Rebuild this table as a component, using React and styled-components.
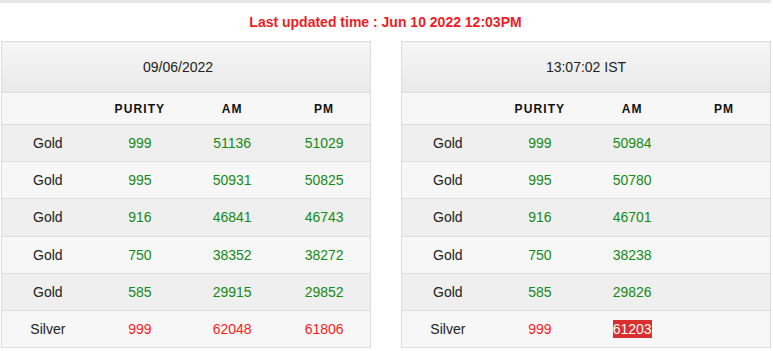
import React from "react";
import styled, { createGlobalStyle } from "styled-components";

const GlobalStyle = createGlobalStyle`
  body {
    margin: 0;
    background: #fff;
    font-family: "Liberation Sans", Arial, sans-serif;
    color: #333;
  }
`;

const leftRows = [
  { metal: "Gold", purity: "999", am: "51136", pm: "51029" },
  { metal: "Gold", purity: "995", am: "50931", pm: "50825" },
  { metal: "Gold", purity: "916", am: "46841", pm: "46743" },
  { metal: "Gold", purity: "750", am: "38352", pm: "38272" },
  { metal: "Gold", purity: "585", am: "29915", pm: "29852" },
  { metal: "Silver", purity: "999", am: "62048", pm: "61806" },
];

const rightRows = [
  { metal: "Gold", purity: "999", am: "50984", pm: "" },
  { metal: "Gold", purity: "995", am: "50780", pm: "" },
  { metal: "Gold", purity: "916", am: "46701", pm: "" },
  { metal: "Gold", purity: "750", am: "38238", pm: "" },
  { metal: "Gold", purity: "585", am: "29826", pm: "" },
  { metal: "Silver", purity: "999", am: "61203", pm: "", flash: true },
];

const RateTable = ({ title, rows, shift }) => (
  <Table>
    <thead>
      <tr>
        <TitleCell colSpan={4} $shift={shift}>
          {title}
        </TitleCell>
      </tr>
      <tr>
        <HeadCell />
        <HeadCell>PURITY</HeadCell>
        <HeadCell>AM</HeadCell>
        <HeadCell>PM</HeadCell>
      </tr>
    </thead>
    <tbody>
      {rows.map((row, i) => {
        const silver = row.metal === "Silver";
        return (
          <Row key={i} $odd={i % 2 === 0}>
            <Cell>{row.metal}</Cell>
            <Cell $silver={silver} $value>
              {row.purity}
            </Cell>
            <Cell $silver={silver} $value>
              {row.flash ? <Flash>{row.am}</Flash> : row.am}
            </Cell>
            <Cell $silver={silver} $value>
              {row.pm}
            </Cell>
          </Row>
        );
      })}
    </tbody>
  </Table>
);

const App = () => (
  <>
    <GlobalStyle />
    <Page>
      <TopStrip />
      <Updated>Last updated time : Jun 10 2022 12:03PM</Updated>
      <Tables>
        <RateTable title="09/06/2022" rows={leftRows} shift={16} />
        <RateTable title="13:07:02 IST" rows={rightRows} />
      </Tables>
    </Page>
  </>
);

const Page = styled.div`
  width: 771px;
`;

const TopStrip = styled.div`
  height: 3px;
  background-color: #e6e6e6;
`;

const Updated = styled.div`
  text-align: center;
  color: #ee1c25;
  font-weight: 700;
  font-size: 14px;
  line-height: 16px;
  padding: 11px 0 11px;
`;

const Tables = styled.div`
  display: flex;
  gap: 30px;
  padding-left: 1px;
`;

const Table = styled.table`
  width: 370px;
  table-layout: fixed;
  border-collapse: collapse;
  border: 1px solid #dddddd;
  font-size: 14px;
`;

const TitleCell = styled.th`
  height: 50px;
  padding: 0 ${(p) => p.$shift || 0}px 0 0;
  font-weight: 400;
  font-size: 14px;
  color: #222;
  background: linear-gradient(to bottom, #f6f6f6 0%, #e9e9e9 100%);
  border-bottom: 1px solid #dddddd;
`;

const HeadCell = styled.th`
  height: 31px;
  padding: 0;
  background-color: #f7f7f7;
  font-size: 12px;
  font-weight: 700;
  letter-spacing: 1.1px;
  color: #111;
  border-bottom: 1px solid #dddddd;
`;

const Row = styled.tr`
  background-color: ${(p) => (p.$odd ? "#efefef" : "#f7f7f7")};
  border-bottom: 1px solid #dddddd;
`;

const Cell = styled.td`
  height: 36.2px;
  padding: 0;
  text-align: center;
  color: ${(p) => (p.$value ? (p.$silver ? "#ff1a1a" : "#158a15") : "#222")};
`;

const Flash = styled.span`
  background-color: #d9302f;
  color: #fff;
  padding: 1px 0;
`;

export default App;
